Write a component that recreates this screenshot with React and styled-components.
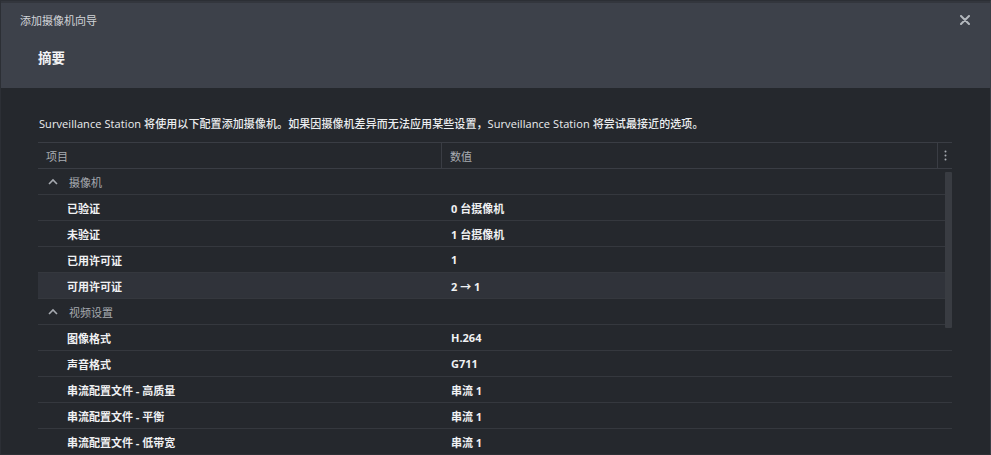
import React from "react";
import styled, { createGlobalStyle } from "styled-components";

const GlobalStyle = createGlobalStyle`
  html, body {
    margin: 0;
    padding: 0;
    background: #25282d;
  }
  body {
    font-family: "Open Sans", "Noto Sans CJK SC", sans-serif;
  }
`;

const Window = styled.div`
  width: 991px;
  height: 455px;
  box-sizing: border-box;
  border: 1px solid #2c2f35;
  border-right-color: #3a3e45;
  background: #25282d;
  display: flex;
  flex-direction: column;
  overflow: hidden;
`;

const Header = styled.div`
  background: #3d414a;
  height: 87px;
  box-sizing: border-box;
  border-top: 2px solid #33363d;
  padding: 0 20px 0 19px;
  display: flex;
  flex-direction: column;
  flex-shrink: 0;
`;

const TitleBar = styled.div`
  display: flex;
  align-items: center;
  justify-content: space-between;
  height: 34px;
`;

const Title = styled.span`
  font-size: 11px;
  color: #d2d4d8;
`;

const CloseButton = styled.button`
  width: 18px;
  height: 18px;
  padding: 0;
  margin-right: -4px;
  background: none;
  border: none;
  display: flex;
  align-items: center;
  justify-content: center;
  cursor: pointer;
`;

const Subtitle = styled.h2`
  margin: 10px 0 0 18px;
  font-size: 13.5px;
  font-weight: 700;
  color: #f2f3f5;
`;

const Body = styled.div`
  padding: 28px 38px 0 37px;
  display: flex;
  flex-direction: column;
`;

const Description = styled.p`
  margin: 0 0 10px 1px;
  font-size: 11px;
  line-height: 16px;
  letter-spacing: 0.08px;
  color: #eceef0;
  font-weight: 500;
`;

const Table = styled.div`
  position: relative;
  display: flex;
  flex-direction: column;
  border-top: 1px solid #3a3d44;
`;

const Row = styled.div`
  display: grid;
  grid-template-columns: 404px 1fr;
  height: 26px;
  box-sizing: border-box;
  border-bottom: 1px solid #35383e;
  background: ${({ $active }) => ($active ? "#30333a" : "transparent")};
  align-items: center;
`;

const HeaderRow = styled(Row)`
  grid-template-columns: 404px 1fr 14px;
  border-bottom-color: #3a3d44;
`;

const HeadCell = styled.div`
  height: 100%;
  display: flex;
  align-items: center;
  padding-left: ${({ $pad }) => $pad || 8}px;
  font-size: 11px;
  color: #a9adb3;
  border-right: ${({ $divider }) => ($divider ? "1px solid #3a3d44" : "none")};
`;

const MenuCell = styled.div`
  height: 100%;
  display: flex;
  align-items: center;
  justify-content: center;
`;

const GroupCell = styled.div`
  grid-column: 1 / -1;
  display: flex;
  align-items: center;
  gap: 11px;
  padding-left: 10px;
  font-size: 11px;
  color: #a6aab0;
`;

const Cell = styled.div`
  padding-left: ${({ $pad }) => $pad}px;
  font-size: 11px;
  font-weight: 700;
  color: #f0f1f3;
  white-space: nowrap;
`;

const Scrollbar = styled.div`
  position: absolute;
  right: 0;
  top: 29px;
  width: 7px;
  height: 156px;
  background: #393c42;
  border-radius: 1px;
`;

const Chevron = () => (
  <svg width="10" height="7" viewBox="0 0 10 7">
    <path d="M1 6 L5 2 L9 6" fill="none" stroke="#a6aab0" strokeWidth="1.6" />
  </svg>
);

const groups = [
  {
    name: "摄像机",
    rows: [
      ["已验证", "0 台摄像机"],
      ["未验证", "1 台摄像机"],
      ["已用许可证", "1"],
      ["可用许可证", "2 → 1", true],
    ],
  },
  {
    name: "视频设置",
    rows: [
      ["图像格式", "H.264"],
      ["声音格式", "G711"],
      ["串流配置文件 - 高质量", "串流 1"],
      ["串流配置文件 - 平衡", "串流 1"],
      ["串流配置文件 - 低带宽", "串流 1"],
    ],
  },
];

export default function App() {
  return (
    <>
      <GlobalStyle />
      <Window>
        <Header>
          <TitleBar>
            <Title>添加摄像机向导</Title>
            <CloseButton aria-label="关闭">
              <svg width="10" height="10" viewBox="0 0 10 10">
                <path
                  d="M1 1 L9 9 M9 1 L1 9"
                  stroke="#b4b8be"
                  strokeWidth="2"
                  strokeLinecap="round"
                />
              </svg>
            </CloseButton>
          </TitleBar>
          <Subtitle>摘要</Subtitle>
        </Header>
        <Body>
          <Description>
            Surveillance Station 将使用以下配置添加摄像机。如果因摄像机差异而无法应用某些设置，Surveillance
            Station 将尝试最接近的选项。
          </Description>
          <Table>
            <HeaderRow>
              <HeadCell $divider>项目</HeadCell>
              <HeadCell $pad={8} $divider>
                数值
              </HeadCell>
              <MenuCell>
                <svg width="3" height="11" viewBox="0 0 3 11">
                  <circle cx="1.5" cy="1.5" r="1" fill="#a9adb3" />
                  <circle cx="1.5" cy="5.5" r="1" fill="#a9adb3" />
                  <circle cx="1.5" cy="9.5" r="1" fill="#a9adb3" />
                </svg>
              </MenuCell>
            </HeaderRow>
            {groups.map((g) => (
              <React.Fragment key={g.name}>
                <Row>
                  <GroupCell>
                    <Chevron />
                    {g.name}
                  </GroupCell>
                </Row>
                {g.rows.map(([label, value, active]) => (
                  <Row key={label} $active={active}>
                    <Cell $pad={29}>{label}</Cell>
                    <Cell $pad={9}>{value}</Cell>
                  </Row>
                ))}
              </React.Fragment>
            ))}
            <Scrollbar />
          </Table>
        </Body>
      </Window>
    </>
  );
}
